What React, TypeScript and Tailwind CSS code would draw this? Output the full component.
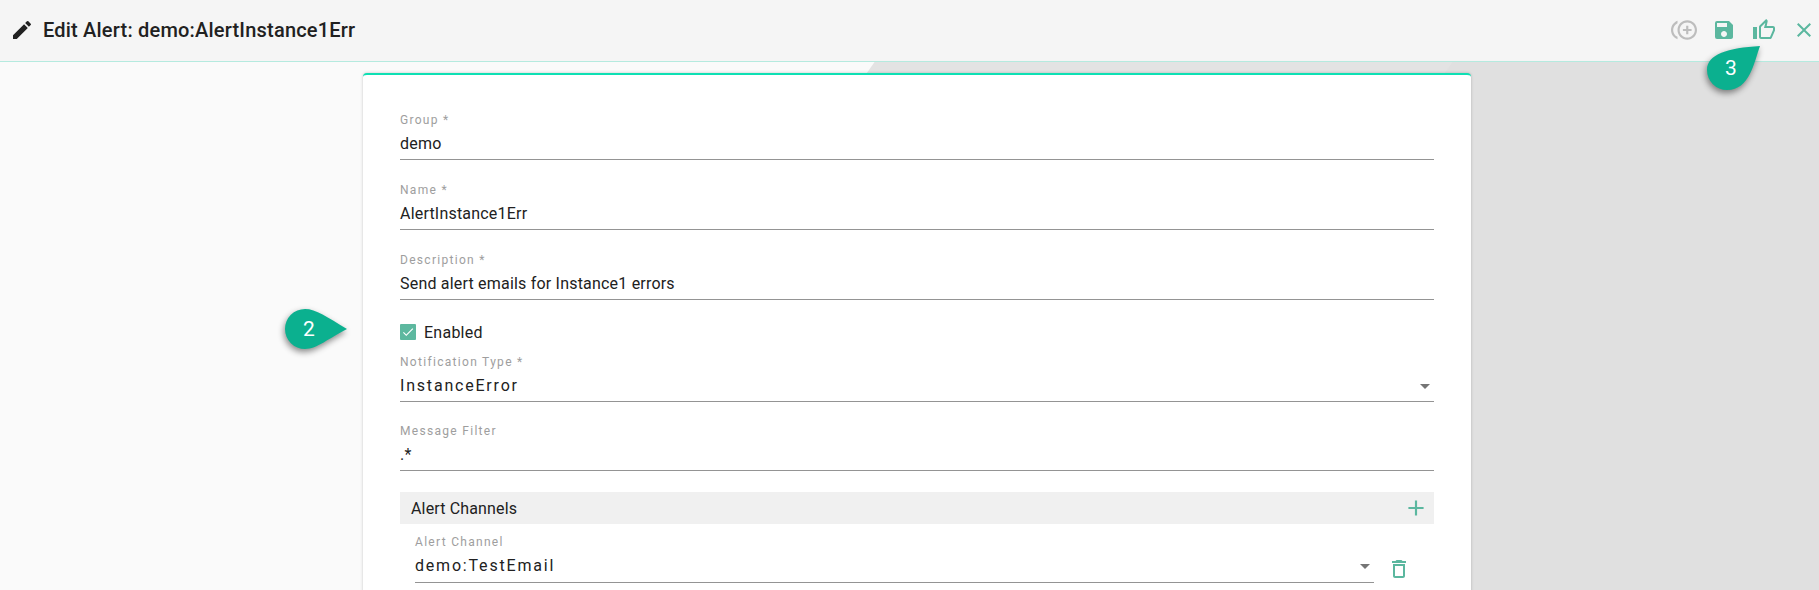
import { MdAdd, MdCheck, MdClose, MdControlPointDuplicate, MdEdit, MdOutlineDelete, MdOutlineThumbUp, MdSave } from "react-icons/md";

function Field({ label, value, select, spaced, tall }: { label: string; value: string; select?: boolean; spaced?: boolean; tall?: boolean }) {
  return (
    <div className={`flex flex-col border-b border-[#949494] ${tall ? "h-[48px]" : "h-[47px]"}`}>
      <label className="text-[12px] leading-[14px] tracking-[1.3px] text-[#9e9e9e]">{label}</label>
      <div className="flex items-center justify-between mt-[5px]">
        <span className={`text-[16px] leading-[24px] text-[#212121] ${spaced ? "tracking-[1.8px]" : "tracking-[0.2px]"}`}>{value}</span>
        {select && <span className="mr-[4px] w-0 h-0 border-x-[5px] border-x-transparent border-t-[5px] border-t-[#757575]" />}
      </div>
    </div>
  );
}

export default function App() {
  return (
    <div className="relative h-[590px] overflow-hidden bg-[#fafafa] font-['Roboto',sans-serif]">
      {/* Header */}
      <header className="relative z-10 flex items-center justify-between h-[62px] bg-[#f5f5f5] border-b border-[#b5eadf] pl-[10px] pr-[3px] pb-[2px]">
        <div className="flex items-center gap-[9px]">
          <MdEdit className="w-[24px] h-[24px] text-[#212121]" />
          <h1 className="text-[20px] font-medium tracking-[0.2px] text-[#212121]">Edit Alert: demo:AlertInstance1Err</h1>
        </div>
        <div className="flex items-center gap-[16px] text-[#5bb79f]">
          <MdControlPointDuplicate className="w-[26px] h-[26px] -mx-[1px] text-[#bdbdbd]" />
          <MdSave className="w-[24px] h-[24px]" />
          <MdOutlineThumbUp className="w-[24px] h-[24px]" />
          <MdClose className="w-[24px] h-[24px]" />
        </div>
      </header>

      {/* Background shapes */}
      <div className="absolute inset-0 bg-[#e3e3e3] [clip-path:polygon(918px_0,100%_0,100%_100%,505px_100%)]" />
      <div className="absolute inset-0 bg-[#e0e0e0] [clip-path:polygon(1496px_0,100%_0,100%_100%,1083px_100%)]" />

      {/* Card */}
      <main className="relative mt-[11px] ml-[363px] w-[1108px] h-[600px] bg-white rounded-t-[4px] border-t-2 border-[#0ee0b4] shadow-[0_0_3px_rgba(0,0,0,0.22)] pt-[38px] px-[37px]">
        <div className="flex flex-col gap-[23px]">
          <Field label="Group *" value="demo" />
          <Field label="Name *" value="AlertInstance1Err" />
          <Field label="Description *" value="Send alert emails for Instance1 errors" />
        </div>
        <div className="flex items-center gap-[8px] mt-[22px] h-[20px]">
          <span className="flex items-center justify-center w-[16px] h-[16px] rounded-[1px] bg-[#5db89f]">
            <MdCheck className="w-[14px] h-[14px] text-white" />
          </span>
          <span className="pt-[1px] text-[16px] tracking-[0.25px] text-[#212121]">Enabled</span>
        </div>
        <div className="flex flex-col gap-[22px] mt-[13px]">
          <Field label="Notification Type *" value="InstanceError" select spaced />
          <Field label="Message Filter" value=".*" />
        </div>
        <div className="flex items-center justify-between h-[32px] mt-[21px] bg-[#f0f0f0] pl-[11px] pr-[5px]">
          <span className="pt-[1px] text-[16px] tracking-[0.15px] text-[#212121]">Alert Channels</span>
          <MdAdd className="w-[26px] h-[26px] text-[#5bb79f]" />
        </div>
        <div className="flex items-start mt-[11px] pl-[15px]">
          <div className="w-[959px]">
            <Field label="Alert Channel" value="demo:TestEmail" select spaced tall />
          </div>
          <MdOutlineDelete className="w-[24px] h-[24px] ml-[13px] mt-[22px] text-[#5bb79f]" />
        </div>
      </main>

      {/* Callouts */}
      <div className="absolute z-20 left-[285px] top-[309px] w-[64px] h-[42px]">
        <svg viewBox="0 0 64 42" className="w-[64px] h-[42px] overflow-visible drop-shadow-[-1px_3px_3px_rgba(0,0,0,0.45)]">
          <path d="M20 0C31 0 42 8 62 20C44 29 32 40 20 40A20 20 0 0 1 20 0Z" fill="#0bb08f" />
        </svg>
        <span className="absolute left-[4px] top-[1px] w-[40px] h-[40px] flex items-center justify-center text-[21px] text-white">2</span>
      </div>
      <div className="absolute z-20 left-[1700px] top-[40px] w-[64px] h-[54px]">
        <svg viewBox="0 0 64 54" className="w-[64px] h-[54px] overflow-visible drop-shadow-[-1px_3px_3px_rgba(0,0,0,0.45)]">
          <path d="M60 6C54 22 50 50 27 50A20 20 0 0 1 7 30C7 14 28 8 60 6Z" fill="#0bb08f" />
        </svg>
        <span className="absolute left-[11px] top-[9px] w-[40px] h-[40px] flex items-center justify-center text-[21px] text-white">3</span>
      </div>
    </div>
  );
}
